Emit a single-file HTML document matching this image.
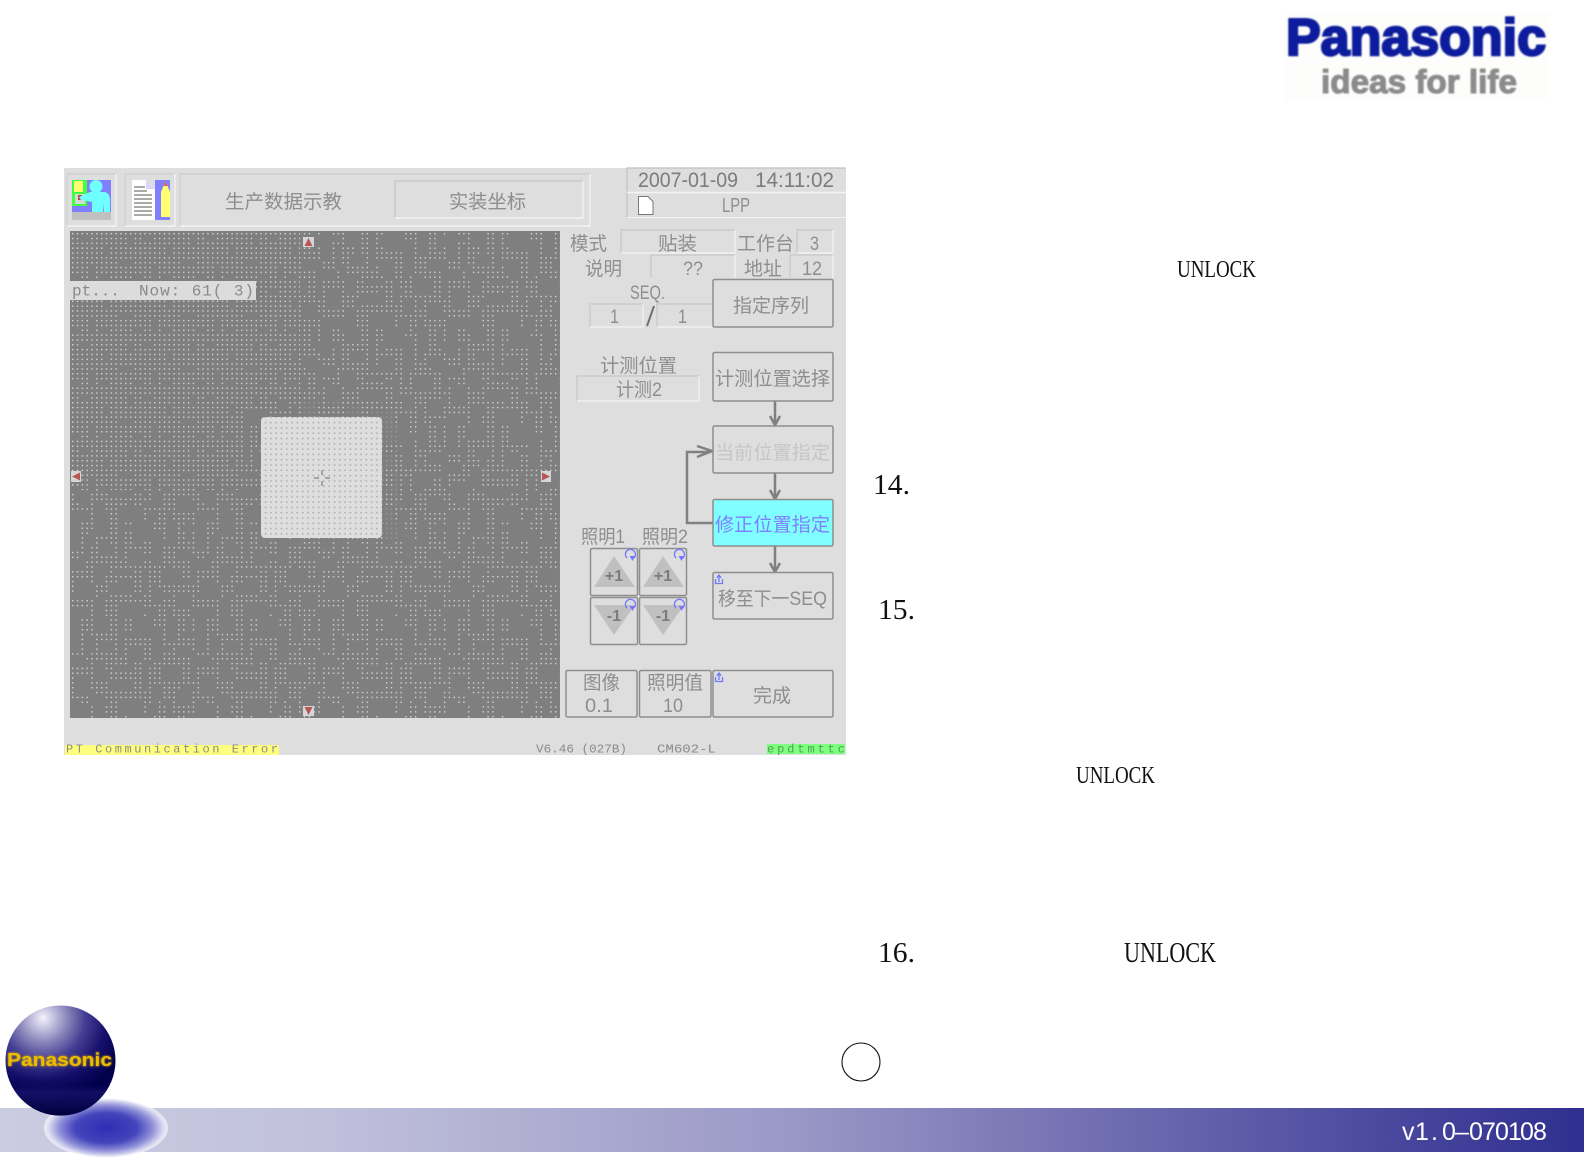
<!DOCTYPE html>
<html lang="zh-CN"><head><meta charset="utf-8"><title>Panasonic</title>
<style>
html,body{margin:0;padding:0;background:#fff;width:1585px;height:1160px;overflow:hidden}
svg{display:block}
.c{font-family:"Liberation Sans","Noto Sans CJK SC",sans-serif;font-size:19px;fill:#8e8e8e;transform:translateY(-1px)}
.s{font-family:"Liberation Serif","Noto Serif CJK SC",serif;fill:#111}
.m{font-family:"Liberation Mono",monospace;fill:#8a8a8a;transform:translateY(-.5px)}
</style></head><body>
<svg width="1585" height="1160" viewBox="0 0 1585 1160" xmlns="http://www.w3.org/2000/svg">
<defs>
<pattern id="pd" width="4.83" height="4.83" patternUnits="userSpaceOnUse" x="72" y="233"><rect width="1.4" height="1.4" fill="#d4d4d4"/></pattern>
<pattern id="h1" width="13" height="11" patternUnits="userSpaceOnUse" patternTransform="translate(70.8 231.8) scale(4.83)">
<path fill="#7f7f7f" d="M2 1h2v1h-2zM7 3h1v2h-1zM10 6h3v1h-3zM4 7h1v3h-1zM0 9h2v1h-2zM12 1h1v2h-1zM6 9h2v1h-2z"/></pattern>
<pattern id="h2" width="26" height="20" patternUnits="userSpaceOnUse" patternTransform="translate(70.8 231.8) scale(4.83)">
<path fill="#7f7f7f" d="M0 0h2v6h-2zM5 0h3v3h-3zM10 0h1v8h-1zM13 0h4v4h-4zM20 0h2v5h-2zM24 0h1v4h-1zM3 3h1v5h-1zM6 5h3v2h-3zM12 6h3v3h-3zM17 2h2v7h-2zM22 6h3v2h-3zM0 8h3v2h-3zM5 9h2v4h-2zM9 10h4v1h-4zM15 10h1v5h-1zM19 10h4v3h-4zM25 7h1v6h-1zM1 12h3v4h-3zM8 13h5v2h-5zM17 14h2v3h-2zM22 15h3v3h-3zM5 16h2v4h-2zM10 17h5v3h-5zM0 18h4v2h-4zM20 18h1v2h-1zM16 18h2v2h-2z"/></pattern>
<pattern id="pk" width="5.3" height="5.3" patternUnits="userSpaceOnUse" x="263" y="420"><rect x="1.8" y="1.8" width="1.6" height="1.6" fill="#aeaeae"/></pattern>
<filter id="b" x="-2%" y="-2%" width="104%" height="104%"><feGaussianBlur stdDeviation=".35"/></filter>
<filter id="b2" x="-5%" y="-5%" width="110%" height="110%"><feGaussianBlur stdDeviation=".7"/></filter>
<filter id="b3" x="-5%" y="-5%" width="110%" height="110%"><feGaussianBlur stdDeviation="1"/></filter>
<linearGradient id="bar" x1="0" x2="1" y1="0" y2="0"><stop offset="0" stop-color="#cbcce2"/><stop offset=".2" stop-color="#c1c1dc"/><stop offset=".5" stop-color="#9a98c6"/><stop offset=".8" stop-color="#5a58a6"/><stop offset="1" stop-color="#2f2f90"/></linearGradient>
<radialGradient id="sph" gradientUnits="userSpaceOnUse" cx="43" cy="1018" r="84"><stop offset="0" stop-color="#f4f2fa"/><stop offset=".1" stop-color="#cfcce6"/><stop offset=".28" stop-color="#8d89bc"/><stop offset=".5" stop-color="#453f94"/><stop offset=".75" stop-color="#16106c"/><stop offset="1" stop-color="#00004a"/></radialGradient>
<linearGradient id="band" x1="0" x2="0" y1="0" y2="1"><stop offset="0" stop-color="#000050" stop-opacity="0"/><stop offset=".35" stop-color="#000050" stop-opacity=".3"/><stop offset=".5" stop-color="#18146c" stop-opacity=".75"/><stop offset="1" stop-color="#00003c"/></linearGradient>
<radialGradient id="shd" cx=".5" cy=".5" r=".5"><stop offset="0" stop-color="#2e2eb4"/><stop offset=".5" stop-color="#4444bc"/><stop offset=".75" stop-color="#8e8ed8"/><stop offset=".92" stop-color="#d8d8f0"/><stop offset="1" stop-color="#fff" stop-opacity=".6"/></radialGradient>
<g id="sw"><path d="M3 9A5 5 0 1 1 9 9.6" fill="none" stroke="#6f78ff" stroke-width="1.3"/><path d="M5.5 7 8.5 12 11 7z" fill="#6f78ff"/></g>
<g id="up"><path d="M1 5v4.5h7V5" fill="none" stroke="#6f78ff" stroke-width="1.3"/><path d="M4.5 8V2M2.3 3.8 4.5 1 6.7 3.8" fill="none" stroke="#6f78ff" stroke-width="1.3"/></g>
</defs>

<!-- Logo -->
<rect x="1284" y="12" width="266" height="90" fill="#fdfdfb"/>
<g filter="url(#b2)">
<text x="1286" y="55" font-family="'Liberation Sans',sans-serif" font-weight="700" font-size="52" fill="#0a1f9c" stroke="#0a1f9c" stroke-width="2.4" textLength="260" lengthAdjust="spacingAndGlyphs">Panasonic</text>
<text x="1321" y="93" font-family="'Liberation Sans',sans-serif" font-weight="700" font-size="33" fill="#8b8b8b" stroke="#8b8b8b" stroke-width="1.1" textLength="196" lengthAdjust="spacingAndGlyphs">ideas for life</text>
</g>

<!-- Machine screen -->
<g filter="url(#b)">
<rect x="64" y="168" width="782" height="587" fill="#dedede"/>
<!-- top frames -->
<g fill="none" stroke-width="1.4">
<path d="M67 226V174H116" stroke="#d0d0d0"/><path d="M116 174V226H67" stroke="#f3f3f3"/>
<path d="M125 226V174H175" stroke="#d0d0d0"/><path d="M175 174V226H125" stroke="#f3f3f3"/>
<path d="M180 226V174H590" stroke="#cfcfcf"/><path d="M590 174V226H180" stroke="#f3f3f3"/>
<path d="M395 218V181H583" stroke="#c8c8c8"/><path d="M583 181V218H395" stroke="#f3f3f3"/>
</g>
<!-- icon1 -->
<rect x="72" y="180" width="39" height="33" fill="#7f7fff"/><rect x="72" y="212" width="39" height="8" fill="#c0c0c0"/>
<rect x="72" y="180" width="15" height="26" fill="#40ff40"/><rect x="74" y="181" width="9" height="11" fill="#ffff70"/><rect x="75" y="194" width="10" height="10" fill="#d8d8d8"/><rect x="78" y="195" width="4" height="5" fill="#c04050"/>
<circle cx="96" cy="186.500" r="6.500" fill="#70ffff"/>
<path d="M79 197 90 192H104C108 192 110 196 110 200V212H104V203L103 212H92V202L81 200z" fill="#70ffff"/>
<!-- icon2 -->
<rect x="155" y="180" width="15" height="40" fill="#7f7fff"/>
<path d="M132 180H146L155 189V220H132z" fill="#fff"/><path d="M146 180 155 189H146z" fill="#d8d8ff"/>
<path d="M134 187H145M134 191H147M134 195H152M134 199H152M134 203H152M134 207H152M134 211H152M134 215H152" stroke="#555" stroke-width="1.1"/>
<path d="M161 192 165.500 181 170 192V217H161z" fill="#ffff70"/><path d="M163.500 186 165.500 181 167.500 186z" fill="#e06060"/>
<text class="c" x="225" y="209" textLength="117" lengthAdjust="spacingAndGlyphs">生产数据示教</text>
<text class="c" x="449" y="209" textLength="77" lengthAdjust="spacingAndGlyphs">实装坐标</text>
<!-- date -->
<path d="M627 217V168H846" fill="none" stroke="#c2c2c2" stroke-width="1.2"/>
<path d="M627 192.500H846" stroke="#f4f4f4" stroke-width="1.400"/><path d="M627 217.500H846" stroke="#f4f4f4"/>
<text x="638" y="187" font-family="'Liberation Sans',sans-serif" font-size="21" fill="#7c7c7c" textLength="100" lengthAdjust="spacingAndGlyphs">2007-01-09</text>
<text x="755" y="187" font-family="'Liberation Sans',sans-serif" font-size="21" fill="#7c7c7c" textLength="79" lengthAdjust="spacingAndGlyphs">14:11:02</text>
<path d="M638.500 196.500H648L653 201.500V214.500H638.500z" fill="#fff" stroke="#777" stroke-width="1"/>
<text x="722" y="212" font-family="'Liberation Sans',sans-serif" font-size="20" fill="#8e8e8e" textLength="28" lengthAdjust="spacingAndGlyphs">LPP</text>

<!-- Gray image -->
<rect x="70" y="231" width="490" height="487" fill="#7f7f7f"/>
<rect x="70" y="231" width="490" height="487" fill="url(#pd)"/>
<rect x="70" y="231" width="490" height="487" fill="url(#h1)"/>
<path d="M300 231H560V718H70V490H240V400H300z" fill="url(#h2)"/>
<path d="M240 540H400V400H300V540z" fill="url(#pd)" opacity=".35"/>
<rect x="70" y="281" width="186" height="19" fill="#dcdcdc"/>
<text class="m" x="72" y="296" font-size="16" textLength="48" lengthAdjust="spacingAndGlyphs">pt...</text>
<text class="m" x="139" y="296" font-size="16" textLength="115" lengthAdjust="spacing">Now: 61(  3)</text>
<!-- bright square -->
<rect x="261" y="417" width="121" height="121" rx="4" fill="#dedede"/>
<rect x="261" y="417" width="121" height="121" rx="4" fill="url(#pk)"/>
<path d="M322 470V475M322 481V486M314 478H319M325 478H330" stroke="#7e7e7e" stroke-width="1.2"/>
<!-- markers -->
<rect x="303" y="237" width="11" height="10" fill="#d6d6d6"/><path d="M308.500 238 312.500 246H304.500z" fill="#b85656"/>
<rect x="303" y="706" width="11" height="10" fill="#d6d6d6"/><path d="M308.500 715 312.500 707H304.500z" fill="#b85656"/>
<rect x="71" y="471" width="10" height="11" fill="#d6d6d6"/><path d="M72 476.500 80 472.500V480.500z" fill="#b85656"/>
<rect x="541" y="471" width="10" height="11" fill="#d6d6d6"/><path d="M550 476.500 542 472.500V480.500z" fill="#b85656"/>

<!-- Info fields -->
<g fill="none" stroke-width="1.200">
<path d="M621 253V230H735" stroke="#c8c8c8"/><path d="M735 230V253H621" stroke="#f4f4f4"/>
<path d="M797 253V230H833" stroke="#c8c8c8"/><path d="M833 230V253H797" stroke="#f4f4f4"/>
<path d="M651 278V255H735" stroke="#c8c8c8"/><path d="M735 255V278" stroke="#f4f4f4"/>
<path d="M790 278V255H833" stroke="#c8c8c8"/><path d="M833 255V278" stroke="#f4f4f4"/>
<path d="M590 327V304H643" stroke="#c8c8c8"/><path d="M643 304V327H590" stroke="#f4f4f4"/>
<path d="M657 327V304H712" stroke="#c8c8c8"/><path d="M657 327H712" stroke="#f4f4f4"/>
<path d="M577 401V376H699" stroke="#c8c8c8"/><path d="M699 376V401H577" stroke="#f4f4f4"/>
</g>
<text class="c" x="570" y="251" textLength="37" lengthAdjust="spacingAndGlyphs">模式</text>
<text class="c" x="658" y="251" textLength="39" lengthAdjust="spacingAndGlyphs">贴装</text>
<text class="c" x="737" y="251" textLength="57" lengthAdjust="spacing">工作台</text>
<text class="c" x="810" y="251" font-size="20" textLength="9" lengthAdjust="spacingAndGlyphs">3</text>
<text class="c" x="585" y="276" textLength="37" lengthAdjust="spacingAndGlyphs">说明</text>
<text class="c" x="683" y="276" font-size="20" textLength="20" lengthAdjust="spacingAndGlyphs">??</text>
<text class="c" x="744" y="276" textLength="38" lengthAdjust="spacingAndGlyphs">地址</text>
<text class="c" x="802" y="276" font-size="21" textLength="20" lengthAdjust="spacingAndGlyphs">12</text>
<text class="c" x="630" y="300" font-size="20" textLength="35" lengthAdjust="spacingAndGlyphs">SEQ.</text>
<text class="c" x="610" y="324" font-size="20" textLength="9" lengthAdjust="spacingAndGlyphs">1</text>
<text class="c" x="678" y="324" font-size="20" textLength="9" lengthAdjust="spacingAndGlyphs">1</text>
<path d="M647 326 654 306" stroke="#6f6f6f" stroke-width="2"/>
<text class="c" x="600" y="373" textLength="77" lengthAdjust="spacingAndGlyphs">计测位置</text>
<text class="c" x="616" y="397" textLength="46" lengthAdjust="spacingAndGlyphs">计测2</text>

<!-- flow arrows -->
<g fill="none" stroke="#808080" stroke-width="2.500">
<path d="M775 401V425M770 416 775 425 780 416"/>
<path d="M775 473V499M770 490 775 499 780 490"/>
<path d="M775 546V572M770 563 775 572 780 563"/>
<path d="M713 523H687V452H711M697 446 712 451 697 457"/>
</g>

<!-- Buttons -->
<g fill="#dedede" stroke="#8e8e8e" stroke-width="1.500">
<rect x="713" y="279.500" width="120" height="47.500" rx="1.5"/>
<rect x="713" y="352.500" width="120" height="48.500" rx="1.5"/>
<rect x="713" y="426" width="120" height="47" rx="1.5"/>
<rect x="713" y="499.500" width="120" height="46.500" rx="1.5" fill="#7fffff"/>
<rect x="713" y="572.500" width="120" height="46.500" rx="1.5"/>
<rect x="590.500" y="548.500" width="47" height="47" rx="1.5"/>
<rect x="639.500" y="548.500" width="47" height="47" rx="1.5"/>
<rect x="590.500" y="597.500" width="47" height="47" rx="1.5"/>
<rect x="639.500" y="597.500" width="47" height="47" rx="1.5"/>
<rect x="566" y="670.500" width="71" height="46.500" rx="1.5"/>
<rect x="639.500" y="670.500" width="71.500" height="46.500" rx="1.5"/>
<rect x="713" y="670.500" width="120" height="46.500" rx="1.5"/>
</g>
<text class="c" x="733" y="313" textLength="76" lengthAdjust="spacingAndGlyphs">指定序列</text>
<text class="c" x="715" y="386" textLength="115" lengthAdjust="spacingAndGlyphs">计测位置选择</text>
<text class="c" x="715" y="460" textLength="115" lengthAdjust="spacingAndGlyphs" style="fill:#c6c6c6">当前位置指定</text>
<text class="c" x="715" y="532" textLength="115" lengthAdjust="spacingAndGlyphs" style="fill:#7f7fff">修正位置指定</text>
<text class="c" x="718" y="606" textLength="109" lengthAdjust="spacingAndGlyphs">移至下一SEQ</text>
<use href="#up" x="714.5" y="574"/>
<use href="#up" x="714.5" y="672"/>
<text class="c" x="581" y="544" textLength="44" lengthAdjust="spacingAndGlyphs">照明1</text>
<text class="c" x="642" y="544" textLength="46" lengthAdjust="spacingAndGlyphs">照明2</text>
<g fill="#c0c0c0">
<path d="M614 556 635 587H594z"/><path d="M663 556 684 587H643z"/>
<path d="M594 605H635L614 635z"/><path d="M643 605H684L663 635z"/>
</g>
<g font-family="'Liberation Sans',sans-serif" font-weight="700" font-size="16" fill="#7c7c7c" text-anchor="middle">
<text x="614" y="581">+1</text><text x="663" y="581">+1</text>
<text x="614" y="621">-1</text><text x="663" y="621">-1</text>
</g>
<use href="#sw" x="624" y="549"/><use href="#sw" x="673" y="549"/><use href="#sw" x="624" y="599"/><use href="#sw" x="673" y="599"/>
<text class="c" x="583" y="690" textLength="37" lengthAdjust="spacingAndGlyphs">图像</text>
<text class="c" x="585" y="713" font-size="21" textLength="28" lengthAdjust="spacingAndGlyphs">0.1</text>
<text class="c" x="647" y="690" textLength="56" lengthAdjust="spacingAndGlyphs">照明值</text>
<text class="c" x="663" y="713" font-size="21" textLength="20" lengthAdjust="spacingAndGlyphs">10</text>
<text class="c" x="753" y="703" textLength="38" lengthAdjust="spacingAndGlyphs">完成</text>

<!-- status -->
<rect x="65" y="745" width="214" height="10" fill="#ffff7f"/>
<text class="m" x="66" y="753" font-size="12" textLength="212" lengthAdjust="spacing">PT Communication Error</text>
<text class="m" x="536" y="753" font-size="12" textLength="91" lengthAdjust="spacingAndGlyphs">V6.46 (027B)</text>
<text class="m" x="657" y="753" font-size="12" textLength="59" lengthAdjust="spacingAndGlyphs">CM602-L</text>
<rect x="767" y="744" width="78" height="10" fill="#7fff7f"/>
<text class="m" x="767" y="753" font-size="12" textLength="78" lengthAdjust="spacing" style="fill:#4f9f4f">epdtmttc</text>
</g>

<!-- Right-hand text -->
<text class="s" x="1177" y="277" font-size="24" textLength="79" lengthAdjust="spacingAndGlyphs">UNLOCK</text>
<text class="s" x="873" y="494" font-size="29" textLength="37" lengthAdjust="spacingAndGlyphs">14.</text>
<text class="s" x="878" y="619" font-size="29" textLength="37" lengthAdjust="spacingAndGlyphs">15.</text>
<text class="s" x="1076" y="783" font-size="24" textLength="79" lengthAdjust="spacingAndGlyphs">UNLOCK</text>
<text class="s" x="878" y="962" font-size="29" textLength="37" lengthAdjust="spacingAndGlyphs">16.</text>
<text class="s" x="1124" y="962" font-size="29" textLength="92" lengthAdjust="spacingAndGlyphs">UNLOCK</text>
<circle cx="861" cy="1062" r="19" fill="#fff" stroke="#111" stroke-width="1.1"/>

<!-- footer -->
<rect x="0" y="1108" width="1584" height="44" fill="url(#bar)"/>
<ellipse cx="106" cy="1128" rx="62" ry="30" fill="url(#shd)"/>
<circle cx="60.500" cy="1060.500" r="55" fill="url(#sph)"/>
<path d="M6 1068H115A55 55 0 0 1 6 1068z" fill="url(#band)"/>
<g filter="url(#b3)" opacity=".9"><text x="7" y="1066" font-family="'Liberation Sans',sans-serif" font-weight="700" font-size="18" fill="#d8ac00" stroke="#d8ac00" stroke-width=".5" textLength="105" lengthAdjust="spacingAndGlyphs">Panasonic</text></g>
<text x="7" y="1066" font-family="'Liberation Sans',sans-serif" font-weight="700" font-size="18" fill="#ecbc00" textLength="105" lengthAdjust="spacingAndGlyphs">Panasonic</text>
<text y="1140" x="1402 1415 1431 1442 1455 1469 1482 1495 1508 1520 1533" font-family="'Liberation Sans',sans-serif" font-size="25" fill="#fff">v1.0–070108</text>
</svg>
</body></html>
